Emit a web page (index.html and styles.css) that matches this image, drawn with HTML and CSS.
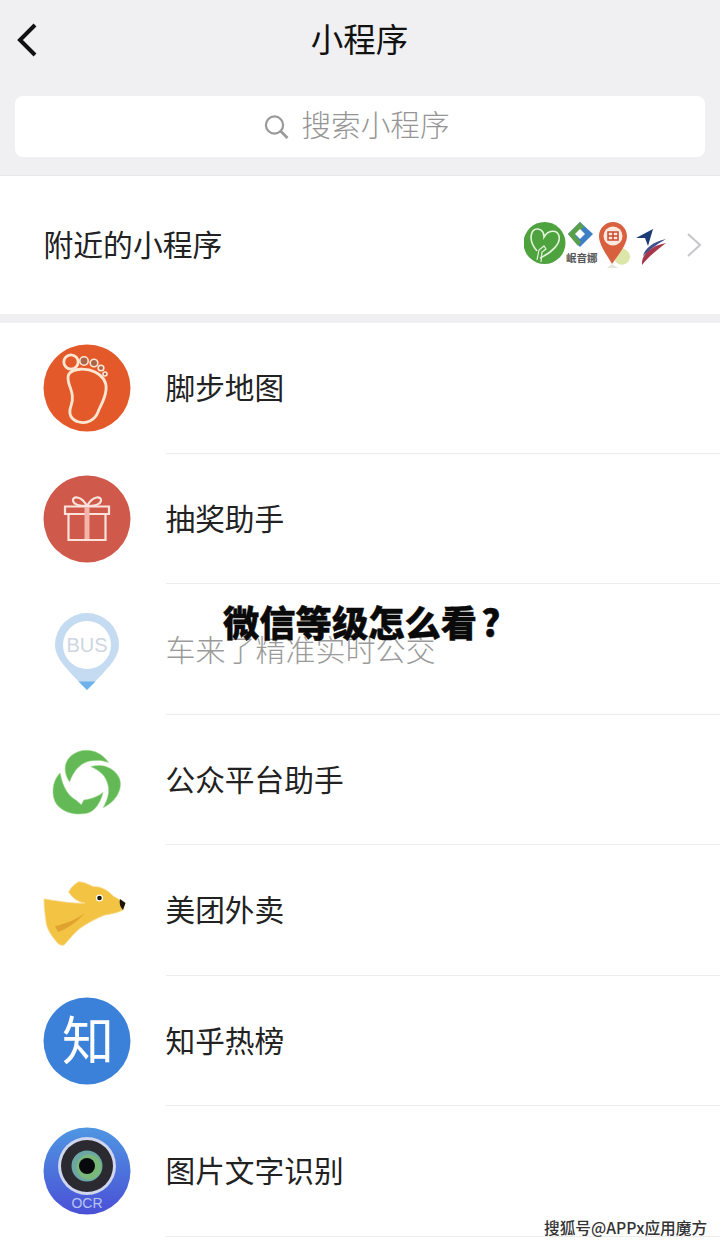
FILE: index.html
```html
<!doctype html>
<html>
  <head>
    <meta charset="utf-8">
    <title>小程序</title>
    <link rel="stylesheet" href="styles.css">
  </head>
  <body>
    <div class="page">
      <div class="header">
        <div class="navbar">
          <svg class="back-icon" width="24" height="36" viewBox="0 0 24 36">
            <path d="M20 3 L5 18 L20 33" fill="none" stroke="#111" stroke-width="4" />
          </svg>
          <div class="nav-title">小程序</div>
        </div>
        <div class="search-box">
          <svg class="search-icon" width="25" height="24" viewBox="0 0 25 24">
            <circle cx="10.5" cy="10" r="8.6" fill="none" stroke="#999" stroke-width="2.2" />
            <path d="M16.5 16 L23.5 23" stroke="#999" stroke-width="2.6" />
          </svg>
          <span class="search-text">搜索小程序</span>
        </div>
      </div>

      <div class="nearby">
        <div class="nearby-title">附近的小程序</div>
        <svg class="nearby-logos" width="144" height="48" viewBox="0 0 144 48">
          <circle cx="20.5" cy="22" r="21" fill="#4ea33f" />
          <path d="M13 30 C4 20 6 7 14 8 C19 9 20 13 20 16 C24 9 33 8 35 15 C37 23 27 32 16 37" fill="none" stroke="#e6f3de" stroke-width="1.6" />
          <path d="M13 39 L15 29 L20 25 L22 28 L18 31 L17 41" fill="none" stroke="#e6f3de" stroke-width="1.2" />
          <path d="M56 1 L69 13 L56 26 L44 13 Z" fill="#3f7fc4" />
          <path d="M44 13 L56 1 L60 6 L51 14 L57 21 L54 25 Z" fill="#5aa04a" />
          <path d="M56 8 L61 13 L56 18 L51 13 Z" fill="#fff" />
          <text class="logo-text" x="42" y="41">岷音娜</text>
          <path d="M95 26 C104 28 109 34 104 41 C99 46 91 44 90 36 Z" fill="#dbe6a8" />
          <path d="M75 15 C75 7 82 1 89 1 C97 1 103 8 103 15 C103 24 94 34 88 43 C83 34 75 24 75 15 Z" fill="#d9603f" />
          <circle cx="89" cy="15" r="9.5" fill="#fde9df" />
          <path d="M84 11 H94 V19 H84 Z M84 15 H94 M89 11 V19" fill="none" stroke="#c9492f" stroke-width="1.5" />
          <path d="M88 43 L83 47 H94 Z" fill="#e3e6dc" />
          <path d="M112 17 L129 8 L124 25 L121 17 Z" fill="#1d3a78" />
          <path d="M118 44 C117 33 127 25 142 22 C133 29 125 35 118 44 Z" fill="#a8364a" />
          <path d="M119 35 C121 27 129 21 142 18 C132 24 125 29 119 35 Z" fill="#3f4f8f" />
        </svg>
        <svg class="chevron" width="16" height="26" viewBox="0 0 16 26">
          <path d="M2 2 L14 13 L2 24" fill="none" stroke="#c6c6ca" stroke-width="2" />
        </svg>
      </div>

      <div class="list">
        <div class="row">
          <svg class="row-icon" viewBox="0 0 88 88">
            <circle cx="44" cy="44" r="43.5" fill="#e4592a" />
            <g fill="none" stroke="#fde6d2" stroke-width="2.8">
              <circle cx="28" cy="18" r="7.2" />
              <path d="M26 30 C30 24 44 24 52 28 C60 32 64 38 63 46 C62 56 57 62 55 68 C52 76 44 80 36 78 C28 76 25 70 28 62 C31 54 29 48 26 40 C25 36 24 33 26 30 Z" />
            </g>
            <g fill="#a9644a" stroke="#fde6d2" stroke-width="1.6">
              <circle cx="41" cy="17" r="4.2" />
              <circle cx="51" cy="19" r="3.8" />
              <circle cx="58" cy="24" r="2.8" />
              <circle cx="62" cy="30" r="2" />
            </g>
          </svg>
          <div class="row-name">脚步地图</div>
        </div>
        <div class="row">
          <svg class="row-icon" viewBox="0 0 88 88">
            <circle cx="44" cy="44" r="43.5" fill="#cf5a4b" />
            <g fill="none" stroke="#fbe3dc" stroke-width="2.2">
              <path d="M44 31 C38 20 29 21 30 26 C31 30 38 31 44 31 C50 31 57 30 58 26 C59 21 50 20 44 31 Z" />
              <path d="M22 31.5 H66 V39 H22 Z" />
              <path d="M25.5 39 V65 H62.5 V39" />
            </g>
            <path d="M41.5 32 H46.5 V64 H41.5 Z" fill="#f3b5aa" />
          </svg>
          <div class="row-name">抽奖助手</div>
        </div>
        <div class="row">
          <svg class="row-icon" viewBox="0 0 88 88">
            <path d="M12 40 A32 32 0 1 1 76 40 C76 54 62 66 44 85 C26 66 12 54 12 40 Z" fill="#c4dbf1" />
            <circle cx="44" cy="40" r="24" fill="#fff" />
            <path d="M35.5 76.5 H52.5 L44 85 Z" fill="#6fb1ea" />
            <text class="bus-text" x="44" y="47">BUS</text>
          </svg>
          <div class="row-name row-name-faded">车来了精准实时公交</div>
        </div>
        <div class="row">
          <svg class="row-icon" viewBox="0 0 88 88">
            <g fill="#63b955" stroke="#9bdc8c" stroke-width="0.6" transform="translate(2.2 2.2) scale(0.95)">
              <path d="M25.7 46 C20 38 18 26 28 18 C38 10 56 10 66.7 25.7 C60 23 54 23 47.3 24 C38 26 31 32 25.7 46 Z" />
              <path d="M48 30 C60 26 73 31 78 42 C82 52 76 66 61 73.3 C66 64 68 56 66 49 C64 40 58 34 48 30 Z" />
              <path d="M15.7 36.7 C9 43 6 55 10 66 C15 77 30 82 44 79 C52 77 58 69 61 57 C56 61 50 64 40.7 65 L38 70 L32.3 65 C26 62 19 54 15.7 36.7 Z" />
            </g>
          </svg>
          <div class="row-name">公众平台助手</div>
        </div>
        <div class="row">
          <svg class="row-icon" viewBox="0 0 88 88">
            <path d="M1 33 C15 35 30 38 42 37 C34 36 29 31 25.7 26 C28 21 32 18 35.7 15.7 C42 16 46 19 50.7 20.7 C58 20 66 25 70 30 L82 37 L80 44 C74 47 68 48 62 49 C54 52 44 57 36 63 C30 68 26 74 21 79 C18 80 15 78 13 75 C8 69 4 63 3 56 C2 48 1 40 1 33 Z" fill="#f3c443" stroke="#f7d78a" stroke-width="0.8" />
            <path d="M12 60 C22 58 32 54 42 47 C34 56 24 63 15 66 Z" fill="#e0a32f" />
            <circle cx="56.5" cy="32" r="3.6" fill="#fff" />
            <circle cx="56.5" cy="32" r="2.3" fill="#1c1505" />
            <path d="M77 33 L82.5 37 L80 44 C77 41 76 37 77 33 Z" fill="#1c1505" />
          </svg>
          <div class="row-name">美团外卖</div>
        </div>
        <div class="row">
          <svg class="row-icon" viewBox="0 0 88 88">
            <circle cx="44" cy="44" r="43.5" fill="#3b80d9" />
            <text class="zhi-text" x="45" y="63">知</text>
          </svg>
          <div class="row-name">知乎热榜</div>
        </div>
        <div class="row">
          <svg class="row-icon" viewBox="0 0 88 88">
            <defs>
              <linearGradient id="ocrBg" x1="0" y1="0" x2="0" y2="1">
                <stop offset="0" stop-color="#4f96e2" />
                <stop offset="1" stop-color="#4a50d6" />
              </linearGradient>
            </defs>
            <circle cx="44" cy="44" r="43.5" fill="url(#ocrBg)" />
            <circle cx="44" cy="39" r="29" fill="#cfd6ee" />
            <circle cx="44" cy="39" r="26" fill="#2a2a30" />
            <circle cx="44" cy="39" r="15.5" fill="#6ca7a6" />
            <circle cx="46" cy="40" r="12.5" fill="#79b878" />
            <circle cx="44" cy="39" r="8" fill="#08090c" />
            <text class="ocr-text" x="44" y="81">OCR</text>
          </svg>
          <div class="row-name">图片文字识别</div>
        </div>
      </div>

      <div class="headline">微信等级怎么看<span class="headline-mark">?</span></div>
      <div class="watermark">搜狐号@APPx应用魔方</div>
    </div>
  </body>
</html>
```

FILE: styles.css
```css
:root {
  --background: #f0f0f2;
  --card: #ffffff;
  --text: #222222;
  --text-faded: #9a9a9a;
  --border: #ececec;
}

html,
body {
  margin: 0;
  padding: 0;
}

body {
  font-family: 'Noto Sans CJK SC', 'Noto Sans', sans-serif;
  background-color: var(--background);
  color: var(--text);
}

.page {
  position: relative;
  display: flex;
  flex-direction: column;
  width: 720px;
  height: 1247px;
  overflow: hidden;
}

.header {
  flex-shrink: 0;
  height: 176px;
  padding: 0 15px;
  box-sizing: border-box;
  border-bottom: 1px solid #e8e8ea;
}

.navbar {
  position: relative;
  display: flex;
  align-items: center;
  justify-content: center;
  height: 79px;
}

.back-icon {
  position: absolute;
  left: 0;
  top: 22px;
}

.nav-title {
  font-size: 32.5px;
  color: #111111;
  line-height: 44px;
  padding-right: 1px;
  margin-bottom: 4px;
}

.search-box {
  display: flex;
  align-items: center;
  justify-content: center;
  gap: 13px;
  height: 61px;
  margin-top: 17px;
  padding-right: 7px;
  background: var(--card);
  border-radius: 8px;
}

.search-text {
  font-size: 29.6px;
  font-weight: 300;
  color: #959595;
  margin-bottom: 6px;
}

.nearby {
  flex-shrink: 0;
  display: flex;
  align-items: center;
  height: 138px;
  padding: 0 18px 0 43.5px;
  box-sizing: border-box;
  background: var(--card);
}

.nearby-title {
  flex-grow: 1;
  font-size: 29.8px;
  color: var(--text);
  margin-bottom: 4px;
}

.nearby-logos {
  margin-right: 18px;
}

.logo-text {
  font-size: 10.5px;
  font-weight: 700;
  fill: #555;
}

.list {
  flex-grow: 1;
  margin-top: 9px;
  background: var(--card);
}

.row {
  display: flex;
  height: 130.5px;
  padding-left: 43px;
}

.row-icon {
  flex-shrink: 0;
  align-self: center;
  width: 88px;
  height: 88px;
  margin-right: 35px;
}

.row-name {
  flex-grow: 1;
  display: flex;
  align-items: center;
  padding-bottom: 2px;
  text-indent: -0.5px;
  font-size: 29.7px;
  font-weight: 400;
  border-bottom: 1px solid var(--border);
}

.row-name-faded {
  color: var(--text-faded);
  font-size: 30px;
  font-weight: 300;
}

.bus-text {
  font-family: 'Liberation Sans', sans-serif;
  font-size: 20px;
  fill: #cdd6df;
  text-anchor: middle;
}

.zhi-text {
  font-size: 52px;
  fill: #ffffff;
  text-anchor: middle;
}

.ocr-text {
  font-family: 'Liberation Sans', sans-serif;
  font-size: 14px;
  fill: #b9c4f2;
  text-anchor: middle;
}

.headline {
  position: absolute;
  left: 223px;
  top: 595px;
  font-size: 36.3px;
  font-weight: 900;
  line-height: 52px;
  color: #0a0a0a;
  -webkit-text-stroke: 0.4px #0a0a0a;
  white-space: nowrap;
}

.headline-mark {
  margin-left: 4px;
}

.watermark {
  position: absolute;
  left: 544px;
  top: 1216px;
  font-size: 15.7px;
  font-weight: 500;
  line-height: 24px;
  color: #333333;
  text-shadow: 0 0 2px #ffffff;
  white-space: nowrap;
}
```
